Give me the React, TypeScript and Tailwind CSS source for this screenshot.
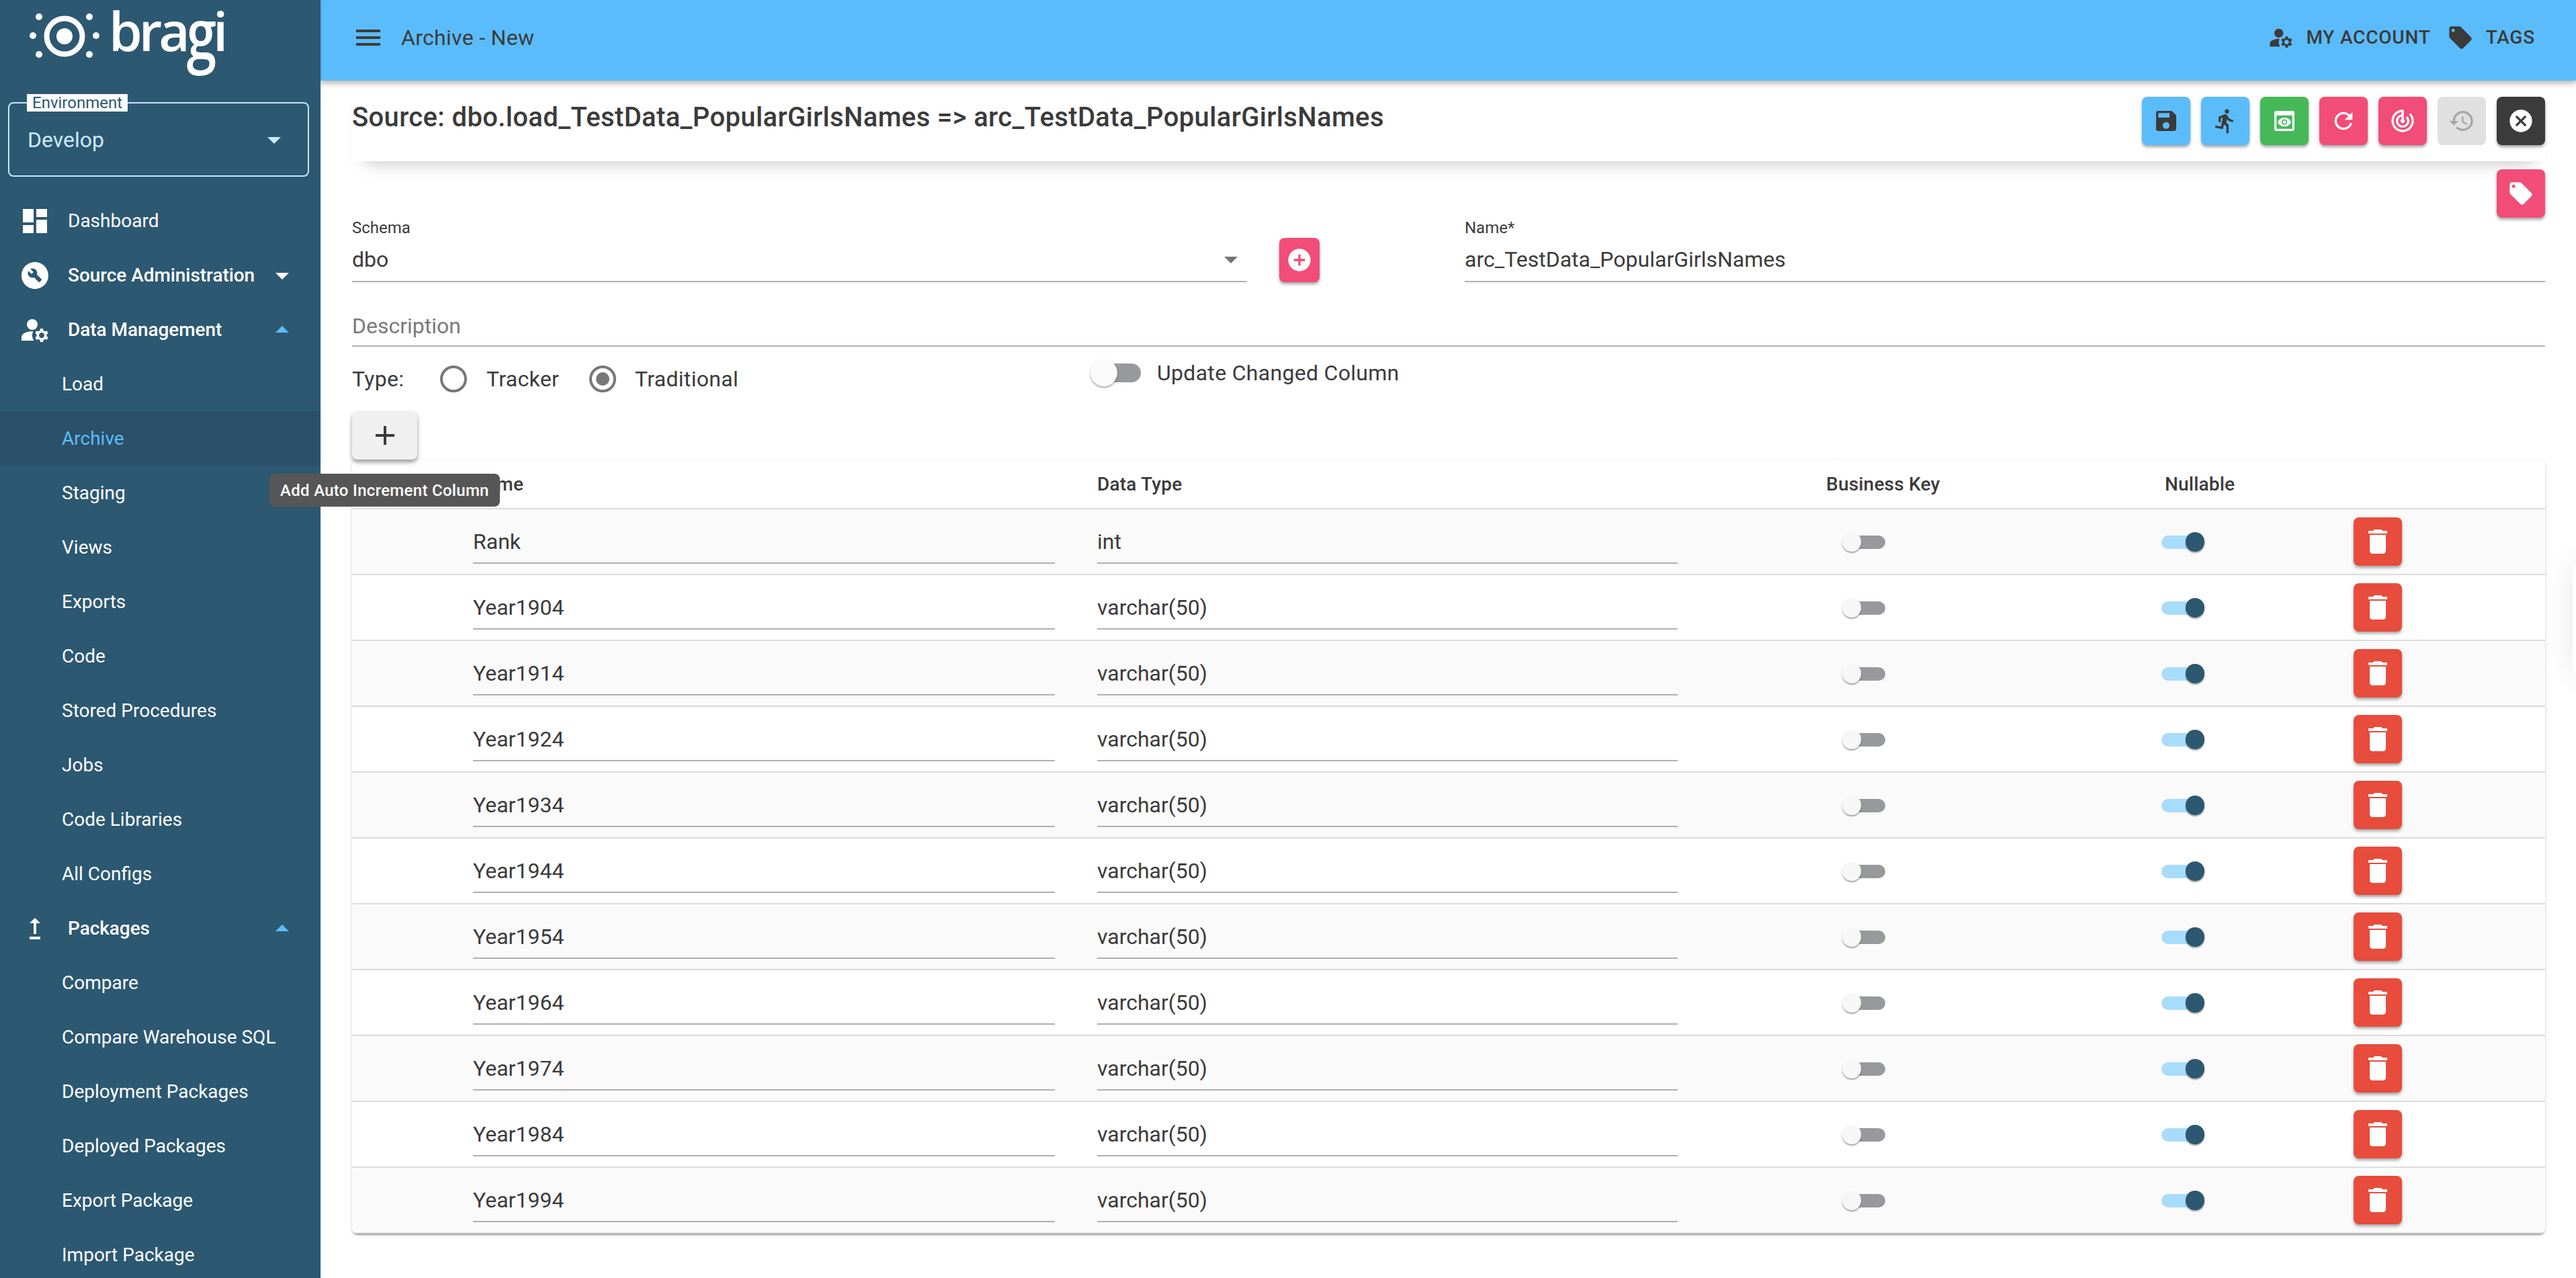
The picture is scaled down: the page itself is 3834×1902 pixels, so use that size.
import React from "react";
import {
  MdDashboard, MdBuildCircle, MdManageAccounts, MdLocalOffer, MdMenu, MdSave, MdDirectionsRun, MdPreview,
  MdRefresh, MdTrackChanges, MdHistory, MdCancel, MdDelete, MdAdd, MdAddCircle, MdUpgrade, MdArrowDropDown, MdArrowDropUp,
} from "react-icons/md";

const Sub = ({ label, active }: { label: string; active?: boolean }) => (
  <div className={`h-[81.05px] flex items-center pl-[92px] text-[28px] font-normal ${active ? "bg-[#2b5068] text-[#5bbcfb]" : "text-white"}`}>
    {label}
  </div>
);

const Parent = ({ label, icon, caret }: { label: string; icon: React.ReactNode; caret?: "up" | "down" }) => (
  <div className="h-[81.05px] flex items-center pl-[28px] text-white">
    <span className="w-[48px] h-[48px] shrink-0">{icon}</span>
    <span className={`ml-[25px] text-[28px] ${caret ? "font-medium tracking-[-0.06px]" : "font-normal"}`}>{label}</span>
    {caret === "down" && <MdArrowDropDown size={48} className="ml-auto mr-[33px] text-white" />}
    {caret === "up" && <MdArrowDropUp size={48} className="ml-auto mr-[33px] text-[#5bbcfb]" />}
  </div>
);

const Logo = () => (
  <div className="h-[152px] relative flex items-start">
    <svg width="160" height="110" viewBox="0 0 160 110" className="shrink-0" fill="#fff">
      <circle cx="96" cy="54" r="26.5" fill="none" stroke="#fff" strokeWidth="8" />
      <circle cx="96" cy="54" r="12" />
      <circle cx="58" cy="25" r="5" />
      <circle cx="133" cy="25" r="5" />
      <circle cx="49" cy="53" r="5" />
      <circle cx="143" cy="53" r="5" />
      <circle cx="58" cy="81" r="5" />
      <circle cx="133" cy="81" r="5" />
    </svg>
    <span className="ml-[2px] mt-[5px] text-[80px] leading-[80px] font-semibold tracking-[-5px] text-white [font-family:'Open_Sans',sans-serif]">
      bra<span className="inline-block origin-[50%_28px] scale-y-[1.29]">g</span>i
    </span>
  </div>
);

const ActionBtn = ({ color, icon, flat }: { color: string; icon: React.ReactNode; flat?: boolean }) => (
  <div className={`w-[72px] h-[72px] rounded-[8px] flex items-center justify-center ${color} ${flat ? "" : "shadow-[0_3px_4px_rgba(0,0,0,0.35)]"}`}>
    {icon}
  </div>
);

const Toggle = ({ on }: { on?: boolean }) => (
  <div className="relative w-[64px] h-[29px] shrink-0">
    <div className={`absolute top-[5px] h-[20px] w-[52px] rounded-full ${on ? "left-0 bg-[#a8dcfb]" : "right-0 bg-[#98999d]"}`} />
    <div className={`absolute top-0 w-[28px] h-[29px] rounded-full shadow-[0_2px_2px_rgba(0,0,0,0.35)] ${on ? "right-0 bg-[#2c5871]" : "left-0 bg-[#f7f7f7]"}`} />
  </div>
);

const Row = ({ name, type, odd }: { name: string; type: string; odd: boolean }) => (
  <div className={`h-[98px] flex items-center border-b-2 border-[#dcdcdc] pl-[180px] ${odd ? "bg-[#fafafa]" : "bg-white"}`}>
    <div className="w-[866px] h-[66px] flex items-center pt-[1px] border-b-2 border-[#b0b0b0] text-[32px]">{name}</div>
    <div className="ml-[63px] w-[864px] h-[66px] flex items-center pt-[1px] border-b-2 border-[#b0b0b0] text-[32px]">{type}</div>
    <div className="ml-[245px]"><Toggle /></div>
    <div className="ml-[411px]"><Toggle on /></div>
    <div className="ml-[222px] w-[72px] h-[72px] rounded-[8px] bg-[#e74c3c] flex items-center justify-center shadow-[0_3px_4px_rgba(0,0,0,0.35)]">
      <MdDelete size={48} className="text-white" />
    </div>
  </div>
);

const Radio = ({ checked }: { checked?: boolean }) => (
  <div className="w-[40px] h-[40px] rounded-full border-4 border-[#787878] flex items-center justify-center shrink-0">
    {checked && <div className="w-[20px] h-[20px] rounded-full bg-[#787878]" />}
  </div>
);

const rows: [string, string][] = [
  ["Rank", "int"],
  ["Year1904", "varchar(50)"],
  ["Year1914", "varchar(50)"],
  ["Year1924", "varchar(50)"],
  ["Year1934", "varchar(50)"],
  ["Year1944", "varchar(50)"],
  ["Year1954", "varchar(50)"],
  ["Year1964", "varchar(50)"],
  ["Year1974", "varchar(50)"],
  ["Year1984", "varchar(50)"],
  ["Year1994", "varchar(50)"],
];

export default function App() {
  return (
    <div className="relative w-[3834px] h-[1902px] flex overflow-hidden bg-white text-[#3b3b3b] [font-family:Roboto,sans-serif]">
      <aside className="w-[477px] shrink-0 bg-[#2c5871] z-20 overflow-hidden shadow-[1px_0_3px_rgba(0,0,0,0.15)]">
        <Logo />
        <div className="relative ml-[12px] w-[448px] h-[111px] border-2 border-[#c8e6fa] rounded-[8px] flex items-center pl-[27px] text-[32px] text-[#cde9fb]">
          <span className="absolute left-[26px] top-[-14px] h-[26px] px-[8px] bg-white text-[24px] leading-[26px] text-[#2c5871]">Environment</span>
          Develop
          <MdArrowDropDown size={48} className="ml-auto mr-[26px] text-[#cde9fb]" />
        </div>
        <nav className="mt-[25px]">
          <Parent label="Dashboard" icon={<MdDashboard size={48} />} />
          <Parent label="Source Administration" icon={<MdBuildCircle size={48} />} caret="down" />
          <Parent label="Data Management" icon={<MdManageAccounts size={48} />} caret="up" />
          {["Load"].map((l) => <Sub key={l} label={l} />)}
          <Sub label="Archive" active />
          {["Staging", "Views", "Exports", "Code", "Stored Procedures", "Jobs", "Code Libraries", "All Configs"].map((l) => <Sub key={l} label={l} />)}
          <Parent label="Packages" icon={<MdUpgrade size={48} />} caret="up" />
          {["Compare", "Compare Warehouse SQL", "Deployment Packages", "Deployed Packages", "Export Package", "Import Package"].map((l) => <Sub key={l} label={l} />)}
        </nav>
      </aside>

      <main className="flex-1 min-w-0 flex flex-col">
        <header className="h-[120px] shrink-0 bg-[#5bbcfb] z-10 flex items-center pb-[8px] pl-[47px] pr-[61px] shadow-[0_4px_8px_rgba(0,0,0,0.3)]">
          <MdMenu size={48} />
          <span className="ml-[25px] text-[32px] tracking-[0.3px]">Archive - New</span>
          <div className="ml-auto flex items-center text-[28px] font-medium tracking-[0.8px]">
            <MdManageAccounts size={40} />
            <span className="ml-[17px]">MY ACCOUNT</span>
            <MdLocalOffer size={40} className="ml-[24px]" />
            <span className="ml-[18px]">TAGS</span>
          </div>
        </header>

        <div className="pl-[47px] pr-[46px]">
          <div className="h-[120px] flex items-start justify-between bg-white shadow-[0_20px_24px_-18px_rgba(0,0,0,0.24)]">
            <h1 className="mt-[31px] text-[40px] leading-[48px] font-medium tracking-[0.35px]">Source: dbo.load_TestData_PopularGirlsNames =&gt; arc_TestData_PopularGirlsNames</h1>
            <div className="mt-[24px] flex gap-[16px]">
              <ActionBtn color="bg-[#5bbcfb]" icon={<MdSave size={40} />} />
              <ActionBtn color="bg-[#5bbcfb]" icon={<MdDirectionsRun size={40} />} />
              <ActionBtn color="bg-[#45b958]" icon={<MdPreview size={40} className="text-white" />} />
              <ActionBtn color="bg-[#f24c78]" icon={<MdRefresh size={40} className="text-white" />} />
              <ActionBtn color="bg-[#f24c78]" icon={<MdTrackChanges size={40} className="text-white" />} />
              <ActionBtn flat color="bg-[#e0e0e0]" icon={<MdHistory size={40} className="text-[#a6a6a6]" />} />
              <ActionBtn color="bg-[#3b3b3b]" icon={<MdCancel size={40} className="text-white" />} />
            </div>
          </div>
          <div className="mt-[12px] flex justify-end">
            <ActionBtn color="bg-[#f24c78]" icon={<MdLocalOffer size={40} className="text-white" />} />
          </div>

          <div className="flex items-start">
            <div className="w-[1332px]">
              <div className="h-[28px] pt-[1px] text-[24px] leading-[28px]">Schema</div>
              <div className="h-[68px] flex items-center justify-between pt-[2px] border-b-2 border-[#b0b0b0] text-[32px]">
                dbo
                <MdArrowDropDown size={48} className="text-[#757575]" />
              </div>
            </div>
            <div className="ml-[48px] mt-[30px] w-[60px] h-[66px] rounded-[8px] bg-[#f24c78] flex items-center justify-center shadow-[0_3px_4px_rgba(0,0,0,0.35)]">
              <MdAddCircle size={40} className="text-white" />
            </div>
            <div className="ml-[216px] flex-1">
              <div className="h-[28px] pt-[1px] text-[24px] leading-[28px]">Name*</div>
              <div className="h-[68px] flex items-center pt-[2px] border-b-2 border-[#b0b0b0] text-[32px]">arc_TestData_PopularGirlsNames</div>
            </div>
          </div>

          <div className="mt-[36px] h-[60px] flex items-center border-b-2 border-[#b0b0b0] text-[32px] text-[#7a7a7a]">Description</div>

          <div className="mt-[16px] flex items-start text-[32px] tracking-[0.3px]">
            <div className="w-[1099px] h-[64px] flex items-center">
              <span className="w-[131px]">Type:</span>
              <Radio />
              <span className="ml-[29px] w-[153px]">Tracker</span>
              <Radio checked />
              <span className="ml-[28px]">Traditional</span>
            </div>
            <div className="h-[46px] flex items-center">
              <div className="relative w-[75px] h-[40px]">
                <div className="absolute top-[6px] right-0 h-[28px] w-[60px] rounded-full bg-[#98999d]" />
                <div className="absolute top-0 left-0 w-[40px] h-[40px] rounded-full bg-[#fafafa] shadow-[0_2px_3px_rgba(0,0,0,0.35)]" />
              </div>
              <span className="ml-[24px]">Update Changed Column</span>
            </div>
          </div>

          <div className="relative z-10 mt-[16px] w-[97px] h-[72px] rounded-[8px] bg-[#f0f0f0] flex items-center justify-center shadow-[0_4px_6px_rgba(0,0,0,0.4)]">
            <MdAdd size={48} />
          </div>

          <div className="mt-px rounded-[8px] bg-white overflow-hidden shadow-[0_4px_2px_-2px_rgba(0,0,0,0.2),0_2px_2px_0_rgba(0,0,0,0.14),0_2px_6px_0_rgba(0,0,0,0.12)]">
            <div className="h-[73px] flex items-center border-b-2 border-[#dcdcdc] pl-[180px] text-[28px] font-medium tracking-[0.2px]">
              <span className="w-[929px]">Name</span>
              <span className="w-[1085px]">Data Type</span>
              <span className="w-[504px]">Business Key</span>
              <span>Nullable</span>
            </div>
            {rows.map(([n, t], i) => (
              <Row key={n} name={n} type={t} odd={i % 2 === 0} />
            ))}
          </div>
        </div>
      </main>

      <div className="absolute z-30 left-[401px] top-[705px] h-[49px] px-[16px] flex items-center rounded-[8px] bg-[#565656] text-white text-[24px] font-medium tracking-[0.3px] whitespace-nowrap">
        Add Auto Increment Column
      </div>
      <div className="absolute right-[-60px] top-[840px] w-[65px] h-[164px] rounded-[8px] bg-white shadow-[0_0_44px_rgba(0,0,0,0.1)]" />
    </div>
  );
}
